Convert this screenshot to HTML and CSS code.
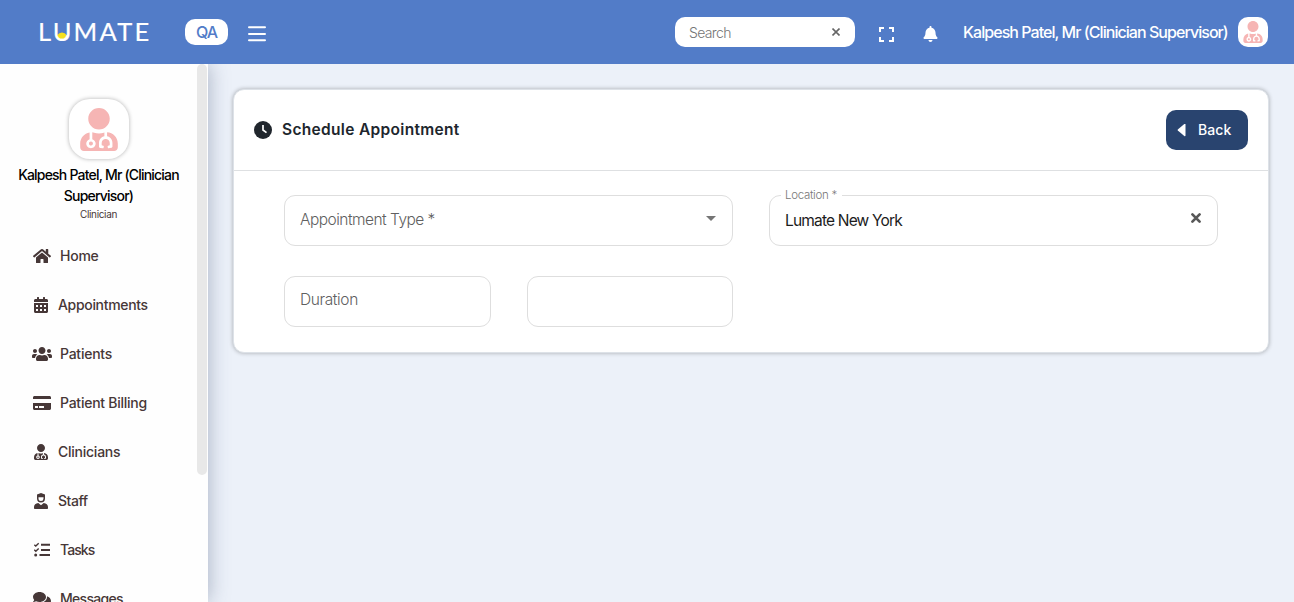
FILE: index.html
```html
<!DOCTYPE html>
<html lang="en">
<head>
<meta charset="utf-8">
<title>Schedule Appointment</title>
<link rel="stylesheet" href="styles.css">
</head>
<body>
<svg class="defs" width="0" height="0">
  <symbol id="doctor" viewBox="0 0 448 512"><path d="M224 256c70.7 0 128-57.3 128-128S294.7 0 224 0 96 57.3 96 128s57.3 128 128 128zM104 424c0 13.3 10.7 24 24 24s24-10.7 24-24-10.7-24-24-24-24 10.7-24 24zm216-135.4v49c36.5 7.4 64 39.8 64 78.4v41.7c0 7.6-5.4 14.2-12.9 15.7l-32.2 6.4c-4.3.9-8.5-1.9-9.4-6.3l-3.1-15.7c-.9-4.3 1.9-8.6 6.3-9.4l19.3-3.9V416c0-62.8-96-65.1-96 1.9v26.7l19.3 3.9c4.3.9 7.1 5.1 6.3 9.4l-3.1 15.7c-.9 4.3-5.1 7.1-9.4 6.3l-31.2-4.2c-7.9-1.1-13.8-7.8-13.8-15.9V416c0-38.6 27.5-70.9 64-78.4v-45.2c-2.2.7-4.4 1.1-6.6 1.9-18 6.3-37.3 9.8-57.4 9.8s-39.4-3.5-57.4-9.8c-7.4-2.6-14.9-4.2-22.6-5.2v81.6c23.1 6.9 40 28.1 40 53.4 0 30.9-25.1 56-56 56s-56-25.1-56-56c0-25.3 16.9-46.5 40-53.4v-80.4C48.5 301 0 355.8 0 422.4v44.8C0 491.9 20.1 512 44.8 512h358.4c24.7 0 44.8-20.1 44.8-44.8v-44.8c0-72-56.8-130.3-128-133.8z"/></symbol>
</svg>
<header class="topbar">
  <div class="logo"><svg class="logo-dot" width="12" height="9" viewBox="0 0 12 9"><path d="M0.6 3.8Q6 -2.8 11.4 3.8Q10 8.4 6 8.4Q2 8.4 0.6 3.8Z" fill="#f4e01f"/></svg><span class="logo-text">LUMATE</span></div>
  <span class="env">QA</span>
  <svg class="burger" width="18" height="16" viewBox="0 0 18 16"><path d="M1 1.200h16M1 8h16M1 14.200h16" stroke="#fff" stroke-width="2" stroke-linecap="round"/></svg>
  <div class="search"><span>Search</span><svg width="8" height="8" viewBox="0 0 8 8"><path d="M.5 .5l7 7M7.500 .5l-7 7" stroke="#666" stroke-width="1.600"/></svg></div>
  <svg class="full" width="15" height="15" viewBox="0 0 15 15"><path d="M1 5V1h4M10 1h4v4M14 10v4h-4M5 14H1v-4" fill="none" stroke="#fff" stroke-width="2"/></svg>
  <svg class="bell" width="15" height="16" viewBox="0 0 448 512"><path fill="#fff" d="M224 512c35.320 0 63.970-28.650 63.970-64H160.030c0 35.350 28.650 64 63.970 64zm215.390-149.710c-19.320-20.760-55.470-51.990-55.470-154.290 0-77.700-54.480-139.900-127.940-155.160V32c0-17.670-14.320-32-31.980-32s-31.980 14.330-31.980 32v20.840C118.560 68.100 64.080 130.300 64.080 208c0 102.300-36.150 133.530-55.470 154.290-6 6.450-8.660 14.160-8.610 21.710.11 16.400 12.980 32 32.100 32h383.800c19.120 0 32-15.600 32.100-32 .05-7.550-2.610-15.270-8.610-21.710z"/></svg>
  <span class="who">Kalpesh Patel, Mr (Clinician Supervisor)</span>
  <span class="avatar-sm"><svg width="20" height="22"><use href="#doctor"/></svg></span>
</header>
<div class="layout">
  <aside class="sidebar">
    <div class="side-main">
      <div class="avatar"><svg width="38" height="43"><use href="#doctor"/></svg></div>
      <div class="name"><span>Kalpesh Patel, Mr (Clinician</span><br><span>Supervisor)</span></div>
      <div class="role">Clinician</div>
      <nav>
        <a class="wide"><svg width="18" height="16" viewBox="0 0 576 512"><path d="M280.370 148.260L96 300.110V464a16 16 0 0 0 16 16l112.060-.29a16 16 0 0 0 15.920-16V368a16 16 0 0 1 16-16h64a16 16 0 0 1 16 16v95.640a16 16 0 0 0 16 16.050L464 480a16 16 0 0 0 16-16V300L295.670 148.260a12.190 12.190 0 0 0-15.300 0zM571.600 251.470L488 182.560V44.050a12 12 0 0 0-12-12h-56a12 12 0 0 0-12 12v72.610L318.470 43a48 48 0 0 0-61 0L4.340 251.470a12 12 0 0 0-1.600 16.900l25.500 31A12 12 0 0 0 45.150 301l235.220-193.740a12.190 12.190 0 0 1 15.300 0L530.900 301a12 12 0 0 0 16.900-1.600l25.500-31a12 12 0 0 0-1.700-16.930z"/></svg><span>Home</span></a>
        <a><svg width="14" height="16" viewBox="0 0 448 512"><path fill-rule="evenodd" d="M400 64h-48V16c0-8.800-7.200-16-16-16h-32c-8.800 0-16 7.200-16 16v48H160V16c0-8.800-7.200-16-16-16h-32c-8.800 0-16 7.200-16 16v48H48C21.500 64 0 85.500 0 112v48h448v-48c0-26.500-21.500-48-48-48zM0 192h448v272c0 26.500-21.500 48-48 48H48c-26.500 0-48-21.500-48-48zM64 256v64h64v-64zM192 256v64h64v-64zM320 256v64h64v-64zM64 384v64h64v-64zM192 384v64h64v-64zM320 384v64h64v-64z"/></svg><span class="t-appts">Appointments</span></a>
        <a class="wide"><svg width="20" height="16" viewBox="0 0 640 512"><path d="M96 224c35.300 0 64-28.700 64-64s-28.700-64-64-64-64 28.700-64 64 28.700 64 64 64zm448 0c35.300 0 64-28.700 64-64s-28.700-64-64-64-64 28.700-64 64 28.700 64 64 64zm32 32h-64c-17.600 0-33.500 7.100-45.100 18.600 40.300 22.100 68.900 62 75.100 109.400h66c17.700 0 32-14.300 32-32v-32c0-35.300-28.700-64-64-64zm-256 0c61.900 0 112-50.100 112-112S381.900 32 320 32 208 82.100 208 144s50.100 112 112 112zm76.800 32h-8.300c-20.800 10-43.900 16-68.500 16s-47.600-6-68.500-16h-8.300C179.600 288 128 339.600 128 403.200V432c0 26.500 21.500 48 48 48h288c26.500 0 48-21.500 48-48v-28.800c0-63.600-51.600-115.200-115.200-115.200zm-223.700-13.400C161.500 263.100 145.600 256 128 256H64c-35.300 0-64 28.700-64 64v32c0 17.700 14.300 32 32 32h65.900c6.300-47.400 34.900-87.300 75.200-109.400z"/></svg><span>Patients</span></a>
        <a class="wide"><svg width="18" height="16" viewBox="0 0 576 512"><path d="M0 432c0 26.500 21.500 48 48 48h480c26.500 0 48-21.500 48-48V256H0v176zm192-68c0-6.600 5.400-12 12-12h136c6.600 0 12 5.400 12 12v40c0 6.600-5.400 12-12 12H204c-6.600 0-12-5.400-12-12v-40zm-128 0c0-6.600 5.400-12 12-12h72c6.600 0 12 5.400 12 12v40c0 6.600-5.400 12-12 12H76c-6.600 0-12-5.400-12-12v-40zM576 80v48H0V80c0-26.500 21.500-48 48-48h480c26.500 0 48 21.500 48 48z"/></svg><span>Patient Billing</span></a>
        <a><svg width="14" height="16"><use href="#doctor"/></svg><span>Clinicians</span></a>
        <a><svg width="14" height="16" viewBox="0 0 14 16"><path fill-rule="evenodd" d="M3 1.500L7 0l4 1.500V5.500a4 4.100 0 0 1-8 0ZM4.500 4.300V5.600a2.500 2.500 0 0 0 5 0V4.300ZM4.300 10l2.700 2.300L9.700 10c2.600.2 4.300 1.800 4.300 4v1.200q0 .8-.8.800H.8Q0 16 0 15.200V14c0-2.200 1.700-3.800 4.300-4Z"/></svg><span class="t-staff">Staff</span></a>
        <a class="wide"><svg width="16" height="16" viewBox="0 0 16 16"><path d="M7 2.800h9M7 8h9M5.500 13h10.500" stroke="#463737" stroke-width="1.900"/><path d="M.3 2.800l1.500 1.300L4.700 1.300M.3 7.800l1.500 1.400L4.700 6.400" fill="none" stroke="#463737" stroke-width="1.400"/><circle cx="1.700" cy="13" r="1.500"/></svg><span class="t-tasks">Tasks</span></a>
        <a class="wide"><svg width="18" height="16" viewBox="0 0 576 512"><path d="M416 192c0-88.400-93.100-160-208-160S0 103.600 0 192c0 34.300 14.100 65.900 38 92-13.400 30.200-35.500 54.200-35.800 54.500-2.200 2.300-2.800 5.700-1.500 8.700S4.800 352 8 352c36.600 0 66.900-12.300 88.700-25 32.200 15.700 70.300 25 111.300 25 114.900 0 208-71.600 208-160zm122 220c23.900-26 38-57.700 38-92 0-66.900-53.500-124.200-129.300-148.100.9 6.600 1.300 13.300 1.300 20.100 0 105.900-107.700 192-240 192-10.800 0-21.300-.8-31.700-1.900C207.800 439.600 281.800 480 368 480c41 0 79.100-9.200 111.300-25 21.800 12.700 52.100 25 88.700 25 3.200 0 6.100-1.900 7.300-4.800 1.300-2.900.7-6.300-1.500-8.700-.3-.3-22.400-24.200-35.800-54.500z"/></svg><span class="t-msg">Messages</span></a>
      </nav>
    </div>
    <div class="scroll"></div>
  </aside>
  <main class="content">
    <section class="card">
      <div class="card-head">
        <svg width="18" height="18" viewBox="0 0 18 18"><circle cx="9" cy="9" r="9" fill="#20262d"/><path d="M9 4v5l3.500 2.600" fill="none" stroke="#fff" stroke-width="1.700"/></svg>
        <h1>Schedule Appointment</h1>
        <button class="back"><svg width="9" height="14" viewBox="0 0 9 14"><path d="M8.500 1.500v11q-.2 1-1.200.4L.8 7.600Q.3 7 .8 6.400L7.300 1.100Q8.300.5 8.500 1.500Z" fill="#fff"/></svg><span>Back</span></button>
      </div>
      <div class="form">
        <div class="field f-wide"><span class="ph t-type">Appointment Type *</span><svg width="10" height="5" viewBox="0 0 10 5"><path d="M0 0h10L5 5z" fill="#757575"/></svg></div>
        <div class="field f-wide"><span class="float">Location *</span><span class="val">Lumate New York</span><svg class="clear" width="12" height="12" viewBox="0 0 12 12"><path d="M2.400 2.400l7.200 7.200M9.600 2.400L2.400 9.600" stroke="#585858" stroke-width="2.700" stroke-linecap="round"/></svg></div>
        <div class="field"><span class="ph t-dur">Duration</span></div>
        <div class="field"></div>
      </div>
    </section>
  </main>
</div>
</body>
</html>
```
FILE: styles.css
```css
* { box-sizing: border-box; }
body { margin: 0; height: 602px; overflow: hidden; font-family: Inter, "Liberation Sans", sans-serif; background: #ecf1f9; display: flex; flex-direction: column; }
svg { display: block; flex: none; }
.defs { position: absolute; }
span { white-space: nowrap; }

.topbar { height: 64px; flex: none; background: #527cc8; display: flex; align-items: center; padding: 0 26px 0 38px; color: #fff; }
.logo { position: relative; width: 112px; height: 30px; }
.logo-text { position: relative; display: block; font: 400 25.500px/29px Lato, sans-serif; letter-spacing: 2.200px; color: #fff; -webkit-text-stroke: .2px #fff; }
.logo-dot { position: absolute; left: 18px; top: 15px; }
.env { margin-left: 35px; width: 43px; height: 26px; border-radius: 10px; background: #fff; color: #527cc8; font-size: 16px; line-height: 27px; font-weight: 500; text-align: center; letter-spacing: -1px; }
.burger { margin: 3px 0 0 19.500px; }
.search { margin-left: auto; width: 180px; height: 30px; border-radius: 10px; background: #fff; display: flex; align-items: center; justify-content: space-between; padding: 0 15px 0 14px; font-size: 14px; font-weight: 300; color: #757575; letter-spacing: -0.65px; }
.full { margin: 4px 0 0 24px; }
.bell { margin: 3px 0 0 29px; }
.who { width: 265px; margin-left: 25px; font-size: 16px; font-weight: 500; letter-spacing: -0.95px; }
.avatar-sm { margin-left: 10px; width: 30px; height: 30px; border-radius: 10px; background: #fff; display: flex; align-items: center; justify-content: center; }
.avatar-sm svg, .avatar svg { fill: #f6b5b4; }

.layout { flex: 1; min-height: 0; display: flex; }
.sidebar { width: 208px; flex: none; background: #fefefe; display: flex; box-shadow: 0 0 20px rgba(60, 75, 110, .4); clip-path: inset(0 -30px 0 0); }
.side-main { width: 197px; padding-top: 35px; }
.avatar { width: 60px; height: 60px; margin: 0 auto 0 69px; border-radius: 21px; background: #fff; box-shadow: 0 0 4px rgba(0, 0, 0, .3); display: flex; align-items: center; justify-content: center; }
.name { margin-top: 5px; text-align: center; font-size: 14px; line-height: 21px; font-weight: 500; color: #000; letter-spacing: -0.8px; }
.role { margin-top: 1px; text-align: center; font-size: 10px; line-height: 15px; color: #463737; letter-spacing: -0.35px; }
nav { margin-top: 8.500px; }
nav a { height: 49px; display: grid; grid-template-columns: 14px auto; column-gap: 10px; padding-left: 34px; align-items: center; justify-content: start; justify-items: center; font-size: 14px; font-weight: 500; color: #463737; letter-spacing: -0.25px; }
nav a.wide { grid-template-columns: 18px auto; column-gap: 9px; padding-left: 33px; }
nav svg { fill: #463737; margin-top: 1px; }
nav .t-appts { letter-spacing: -.32px; }
nav .t-staff { letter-spacing: -.45px; }
nav .t-tasks { letter-spacing: -.95px; }
nav .t-msg { letter-spacing: -.7px; }
.scroll { width: 10px; height: 411px; border-radius: 5px; background: #e8e8e8; }

.content { flex: 1; padding: 25px 25px 0; }
.card { height: 264px; background: #fff; border: 1px solid #dde2e8; border-radius: 11px; box-shadow: 0 0 4px rgba(0, 0, 0, .3); }
.card-head { height: 81px; border-bottom: 1px solid #dee0e2; display: flex; align-items: center; padding: 0 20px; }
h1 { margin: 0 auto 0 10px; font-size: 15.500px; font-weight: 600; line-height: 20px; color: #20262d; letter-spacing: .32px; }
.back { width: 82px; height: 40px; border: 0; border-radius: 10px; background: #29446f; color: #fff; display: flex; align-items: center; gap: 12px; padding: 0 0 0 11px; font: 500 14px/20px Inter, sans-serif; letter-spacing: .1px; }
.back svg { margin-top: -1px; }
.form { display: grid; grid-template-columns: 207px 206px 206px 207px; gap: 30px 36px; padding: 24px 50px; }
.field { position: relative; height: 51px; border: 1px solid #dedede; border-radius: 11px; display: flex; align-items: center; justify-content: space-between; padding: 0 16px 4px 15px; font-size: 15.500px; font-weight: 300; }
.f-wide { grid-column: span 2; }
.ph { color: #606060; }
.t-type { padding-top: 2px; letter-spacing: -.52px; }
.t-dur { letter-spacing: -.38px; }
.val { padding-top: 4px; color: #1c1c1c; font-weight: 400; letter-spacing: -.82px; }
.clear { margin: -2px -1px 0 0; }
.float { position: absolute; top: -8px; left: 11px; padding: 0 5px 0 4px; background: #fff; font-size: 11.500px; line-height: 14px; color: #777; letter-spacing: -.3px; }
```
